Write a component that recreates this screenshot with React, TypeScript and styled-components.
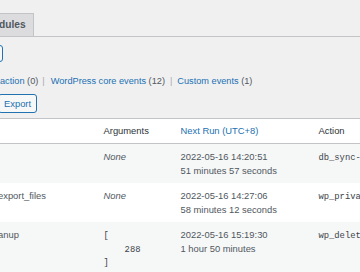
import styled, { createGlobalStyle } from "styled-components";

const GlobalStyle = createGlobalStyle`
  html, body {
    margin: 0;
    padding: 0;
    background: #f0f0f1;
    overflow: hidden;
  }
  body {
    font-family: "Liberation Sans", Arial, sans-serif;
    font-size: 9.4px;
    color: #3c434a;
  }
`;

const Wrap = styled.div`
  margin-left: -10px;
  padding-top: 13px;
  display: flex;
  flex-direction: column;
  align-items: flex-start;
`;

const NavBar = styled.div`
  display: flex;
  align-self: stretch;
  border-bottom: 1px solid #c3c4c7;
`;

const Tab = styled.div`
  box-sizing: border-box;
  height: 23px;
  line-height: 22px;
  padding: 0 7px 0 8px;
  border: 1px solid #c3c4c7;
  border-bottom: none;
  background: #dcdcde;
  color: #50575e;
  font-size: 10.2px;
  font-weight: 600;
`;

const SearchBox = styled.div`
  box-sizing: border-box;
  margin-top: 8px;
  width: 13px;
  height: 17px;
  border: 1px solid #2271b1;
  border-radius: 3px;
  background: #f6f7f7;
`;

const Filters = styled.div`
  margin-top: 12px;
  padding-left: 10px;
  font-size: 9.2px;
  line-height: 14px;
  white-space: nowrap;
  color: #50575e;
`;

const FilterLink = styled.a`
  color: #2271b1;
  text-decoration: none;
`;

const Count = styled.span`
  color: #50575e;
`;

const Sep = styled.span<{ $wide?: boolean }>`
  color: #a7aaad;
  margin: 0 ${(p) => (p.$wide ? "6px" : "5px")} 0 ${(p) => (p.$wide ? "4px" : "5px")};
`;

const ExportButton = styled.button`
  box-sizing: border-box;
  margin: 6px 0 0 8px;
  height: 19px;
  padding: 0 5px;
  border: 1px solid #2271b1;
  border-radius: 3px;
  background: #f6f7f7;
  color: #2271b1;
  font-family: inherit;
  font-size: 9.4px;
  line-height: 17px;
`;

const Table = styled.table`
  margin-top: 5px;
  width: 520px;
  table-layout: fixed;
  border-collapse: collapse;
  border: 1px solid #c3c4c7;
  background: #fff;
`;

const Th = styled.th<{ $sorted?: boolean }>`
  height: 24px;
  box-sizing: border-box;
  padding: 5px 7px;
  line-height: 14px;
  text-align: left;
  font-weight: 400;
  color: ${(p) => (p.$sorted ? "#2271b1" : "#2c3338")};
  border-bottom: 1px solid #c3c4c7;
  white-space: nowrap;
`;

const Row = styled.tr<{ $striped?: boolean }>`
  background: ${(p) => (p.$striped ? "#f6f7f7" : "#fff")};
`;

const Td = styled.td`
  padding: 6px 7px;
  line-height: 13.5px;
  vertical-align: top;
  color: #50575e;
  white-space: nowrap;
  overflow: hidden;
`;

const None = styled.em`
  color: #50575e;
`;

const Mono = styled.code`
  font-family: "Liberation Mono", monospace;
  font-size: 8.8px;
  color: #3c434a;
`;

const ArgsPre = styled.pre`
  margin: 2px 0 0;
  font-family: "Liberation Mono", monospace;
  font-size: 8.8px;
  line-height: 13.5px;
  color: #3c434a;
`;

type Event = {
  hook: string;
  args: string | null;
  next: string;
  rel: string;
  action: string;
};

const events: Event[] = [
  {
    hook: "",
    args: null,
    next: "2022-05-16 14:20:51",
    rel: "51 minutes 57 seconds",
    action: "db_sync-cron_run()",
  },
  {
    hook: "export_files",
    args: null,
    next: "2022-05-16 14:27:06",
    rel: "58 minutes 12 seconds",
    action: "wp_privacy_delete_old_export_files()",
  },
  {
    hook: "anup",
    args: "[\n    288\n]",
    next: "2022-05-16 15:19:30",
    rel: "1 hour 50 minutes",
    action: "wp_delete_expired_cleanup()",
  },
];

export default function App() {
  return (
    <>
      <GlobalStyle />
      <Wrap>
        <NavBar>
          <Tab>dules</Tab>
        </NavBar>
        <SearchBox />
        <Filters>
          <FilterLink href="#">action</FilterLink> <Count>(0)</Count>
          <Sep $wide>|</Sep>
          <FilterLink href="#">WordPress core events</FilterLink>{" "}
          <Count>(12)</Count>
          <Sep>|</Sep>
          <FilterLink href="#">Custom events</FilterLink> <Count>(1)</Count>
        </Filters>
        <ExportButton>Export</ExportButton>
        <Table>
          <colgroup>
            <col style={{ width: 106 }} />
            <col style={{ width: 77 }} />
            <col style={{ width: 138 }} />
            <col />
          </colgroup>
          <thead>
            <tr>
              <Th></Th>
              <Th>Arguments</Th>
              <Th $sorted>Next Run (UTC+8)</Th>
              <Th>Action</Th>
            </tr>
          </thead>
          <tbody>
            {events.map((e, i) => (
              <Row key={i} $striped={i % 2 === 0}>
                <Td>{e.hook}</Td>
                <Td>
                  {e.args ? <ArgsPre>{e.args}</ArgsPre> : <None>None</None>}
                </Td>
                <Td>
                  {e.next}
                  <br />
                  {e.rel}
                </Td>
                <Td>
                  <Mono>{e.action}</Mono>
                </Td>
              </Row>
            ))}
          </tbody>
        </Table>
      </Wrap>
    </>
  );
}
